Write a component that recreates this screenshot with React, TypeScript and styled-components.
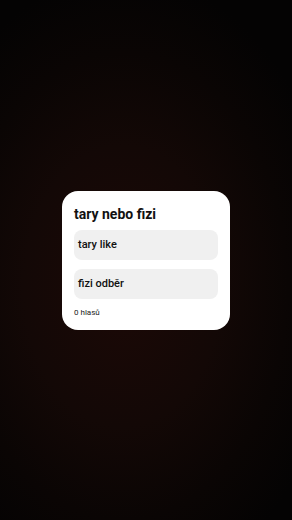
import styled, { createGlobalStyle } from 'styled-components';

const GlobalStyle = createGlobalStyle`
  html, body {
    margin: 0;
    padding: 0;
    background: #050303;
  }
  body {
    font-family: Roboto, "Noto Sans", "Liberation Sans", sans-serif;
  }
`;

const Screen = styled.main`
  width: 292px;
  height: 520px;
  display: flex;
  align-items: center;
  justify-content: center;
  background: radial-gradient(
    ellipse 75% 60% at 42% 55%,
    #1c0906 0%,
    #130806 45%,
    #0a0504 75%,
    #040303 100%
  );
`;

const Card = styled.section`
  width: 168px;
  box-sizing: border-box;
  padding: 12px 12px 11px;
  background: #ffffff;
  border-radius: 16px;
  display: flex;
  flex-direction: column;
`;

const Title = styled.h2`
  margin: 0 0 5px;
  font-size: 14px;
  line-height: 22px;
  font-weight: 700;
  color: #111111;
`;

const Options = styled.div`
  display: flex;
  flex-direction: column;
  gap: 9px;
`;

const Option = styled.button`
  height: 30px;
  border: none;
  border-radius: 8px;
  background: #f0f0f0;
  padding: 0 4px;
  text-align: left;
  font-family: inherit;
  font-size: 11px;
  font-weight: 500;
  color: #111111;
`;

const Votes = styled.div`
  margin-top: 8px;
  font-size: 8px;
  line-height: 12px;
  color: #222222;
`;

export default function App() {
  return (
    <>
      <GlobalStyle />
      <Screen>
        <Card>
          <Title>tary nebo fizi</Title>
          <Options>
            <Option>tary like</Option>
            <Option>fizi odběr</Option>
          </Options>
          <Votes>0 hlasů</Votes>
        </Card>
      </Screen>
    </>
  );
}
